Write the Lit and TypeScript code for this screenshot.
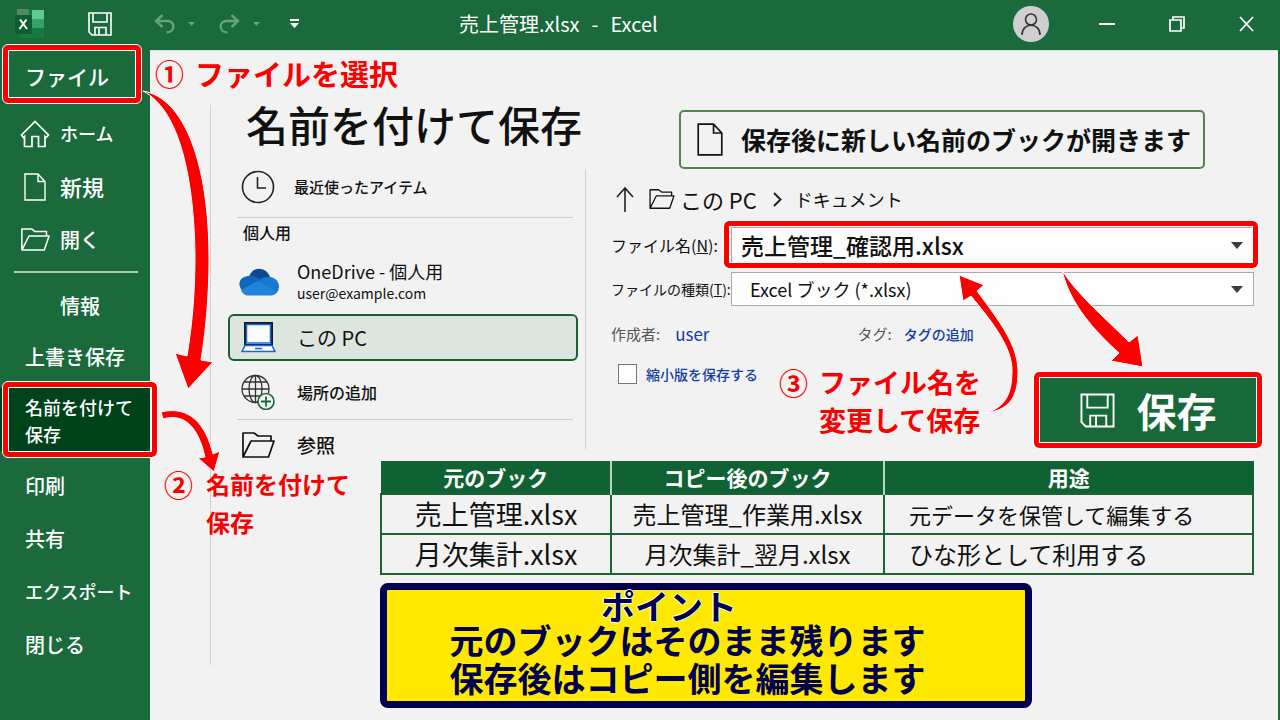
import { LitElement, html, css, svg } from "lit";
import { customElement } from "lit/decorators.js";

const floppy = (size: number, weight: number) => html`
  <svg width=${size} height=${size} viewBox="0 0 24 24" fill="none" stroke="currentColor" stroke-width=${weight} aria-hidden="true">
    <path d="M1 1H23V23H4L1 20Z M5 1V10H19V1 M7 23V15.5H18V23 M11 16V22.5" />
  </svg>`;

const page = (w: number, h: number) => html`
  <svg width=${w} height=${h} viewBox="0 0 22 28" fill="none" stroke="currentColor" stroke-width="1.4" aria-hidden="true">
    <path d="M1 1H14L21 8.5V27H1Z M14 1V8.5H21" />
  </svg>`;

const folder = (w: number, h: number) => html`
  <svg width=${w} height=${h} viewBox="0 0 33 26" fill="none" stroke="currentColor" stroke-width="1.7" stroke-linejoin="round" aria-hidden="true">
    <path d="M1 25V1H12L16 4H29V9 M1 25L9 9H32L26.500 25Z" />
  </svg>`;

const caret = (cls: string, w: number, h: number) => html`
  <svg class=${cls} width=${w} height=${h} viewBox="0 0 12 7" fill="currentColor" aria-hidden="true"><path d="M0 0H12L6 7Z" /></svg>`;

const houseIcon = html`
  <svg width="30" height="28" viewBox="0 0 30 28" fill="none" stroke="currentColor" stroke-width="1.700" aria-hidden="true">
    <path d="M1.500 15L15 1.500L28.500 15L26 17.500L25 16.500V26.500H18.500V16.500H12V26.500H4.500V16.500L3.500 17.500Z" />
  </svg>`;

const undoIcon = svg`<path d="M8 1L1.500 7L8 13 M1.500 7H13C21 7 21 18.500 12 18.500" />`;

@customElement("app-root")
export class AppRoot extends LitElement {
  static styles = css`
    :host {
      display: grid;
      position: relative;
      grid-template: 50px 1fr / 150px 1fr;
      min-height: 100vh;
      background: #1a6a3b;
      color: #111;
      font: 500 16px/1.5 "Noto Sans CJK JP", "Noto Sans", sans-serif;
    }
    * { box-sizing: border-box; }
    button, input, select { font: inherit; color: inherit; margin: 0; padding: 0; border: 0; background: none; border-radius: 0; }
    svg { flex: none; display: block; }
    a { color: #123ea3; text-decoration: none; }

    .titlebar { grid-column: 1 / -1; display: flex; align-items: center; padding: 0 26px 3px 15px; color: #fff; }
    .tool { display: flex; align-items: center; gap: 13px; }
    .dim { color: #64a37e; }
    .logo { margin-right: 44px; }
    .save-tool { margin-right: 42px; }
    .undo { margin-right: 24px; }
    .redo { margin-right: 30px; }
    .doc { display: flex; gap: 12px; margin-left: 160px; font-size: 20px; font-weight: 400; white-space: nowrap; }
    .window { display: flex; align-items: center; gap: 54px; margin-left: auto; }
    .avatar { display: grid; place-items: center; width: 36px; height: 36px; margin-right: -4px; border-radius: 50%; background: #cfcfcf; color: #333; }

    .side { display: flex; flex-direction: column; color: #fff; }
    .item { position: relative; display: flex; align-items: center; gap: 10px; height: 53px; padding-left: 25px; font-size: 20px; line-height: 27px; text-align: left; }
    .item.icon { padding-left: 20px; }
    .item.file { margin-bottom: 4px; font-size: 21px; }
    .item.new { font-size: 22px; }
    .item.small { font-size: 18px; }
    .item.deep { padding-left: 60px; }
    .item.over { height: 50px; padding-bottom: 2px; }
    .item.current { height: 63px; margin: 6px 0 8px; padding-top: 2px; font-size: 18px; background: #00421a; }
    .glyph { display: grid; place-items: center; width: 30px; }
    .side hr { width: 124px; height: 2px; margin: 5px 0 6px 14px; border: 0; background: #a9cdb7; }
    .mark { position: absolute; border: 5px solid #fa0000; border-radius: 5px; outline: 1px solid #fff; pointer-events: none; z-index: 2; }
    .mark::after { content: ""; position: absolute; inset: 0; border: 1px solid #fff; }
    .file .mark { inset: -5px 9px 0 3px; }
    .current .mark { inset: -6px -7px -6px 3px; }

    main { display: flex; margin-right: 2px; background: #f2f2f2; border-top: 1px solid #cfe2d6; }
    .rule { flex: none; width: 61px; margin: 54px 0 55px; border-right: 1px solid #cfcfcf; }
    .body { flex: 1; min-width: 0; padding: 0 24px 12px 17px; }
    .top { display: flex; height: 410px; }
    .places { flex: none; width: 350px; padding-top: 44px; }
    h1 { margin: 0 0 4px 18px; font-size: 42px; line-height: 58px; font-weight: 500; white-space: nowrap; }
    .place { display: flex; align-items: center; gap: 20px; width: 100%; height: 60px; padding-left: 11px; text-align: left; }
    .place .pic { display: grid; place-items: center; width: 38px; }
    .place.drive { height: 68px; padding-top: 4px; line-height: 22px; font-size: 18px; font-weight: 400; }
    .place.pc { height: 47px; padding-left: 9px; border: 2px solid #17612f; border-radius: 6px; background: #dce6de; font-size: 20px; font-weight: 400; }
    .place.add { height: 58px; padding-top: 4px; }
    .place.browse { height: 42px; padding-top: 8px; font-size: 19px; }
    .place.recent { gap: 17px; font-size: 15px; }
    .mail { display: block; font-size: 14px; }
    .places hr { height: 1px; margin: 0 5px 0 9px; border: 0; background: #cdcdcd; }
    .group { margin: 0 0 0 15px; font-size: 16px; line-height: 28px; font-weight: 500; }
    .split { flex: none; width: 1px; margin: 118px 25px 12px 7px; background: #cfcfcf; }

    form { flex: 1; min-width: 0; padding-top: 59px; }
    .notice { display: flex; align-items: center; gap: 18px; height: 59px; margin: 0 49px 0 68px; padding-left: 16px; border: 2px solid #55854f; border-radius: 5px; font-size: 25px; font-weight: 700; white-space: nowrap; }
    .path { display: flex; align-items: center; height: 58px; padding: 2px 0 0 5px; font-size: 22px; font-weight: 400; white-space: nowrap; }
    .path .up { margin-right: 15px; }
    .path .sep { margin: 0 13px 0 16px; }
    .path .leaf { font-size: 18px; }
    .field { position: relative; display: grid; grid-template-columns: 120px 1fr; align-items: center; height: 36px; margin-bottom: 9px; white-space: nowrap; }
    .field label { font-size: 16px; font-weight: 400; }
    .field.kind { height: 34px; margin: 0; }
    .field.kind label { font-size: 14px; }
    .field input, .field select { width: 100%; height: 36px; padding-left: 9px; border: 1px solid #aaa; background: #fdfdfd; font-size: 23px; appearance: none; outline: 0; }
    .field select { height: 34px; padding-left: 18px; font-size: 18px; font-weight: 400; }
    .drop { position: absolute; right: 11px; color: #3c3c3c; pointer-events: none; }
    .field .mark { inset: -6px -4px -5px 113px; }
    .meta { display: flex; align-items: center; height: 56px; font-size: 15px; color: #555; font-weight: 400; white-space: nowrap; }
    .meta a { margin-left: 12px; }
    .meta .author { margin: 0 148px 0 15px; font-size: 17px; }
    .tag { font-size: 14px; font-weight: 500; }
    .finish { display: flex; align-items: flex-start; }
    .thumb { display: flex; align-items: center; gap: 9px; height: 24px; padding-left: 7px; font-size: 14px; color: #123ea3; white-space: nowrap; }
    .thumb input { appearance: none; width: 19px; height: 20px; border: 1px solid #777; background: #fdfdfd; }
    .save { position: relative; display: flex; align-items: center; justify-content: center; gap: 22px; width: 218px; height: 66px; margin: 15px -3px 0 auto; background: #17693a; color: #fff; font-size: 40px; font-weight: 700; line-height: 60px; }
    .save .mark { inset: -5px; }

    .step { display: flex; gap: 11px; margin: 0; color: #fa0000; font-size: 27px; font-weight: 700; line-height: 38px; white-space: nowrap; }
    .num { font-size: 29px; }
    .step1 { position: absolute; left: 155px; top: 54px; font-size: 29px; }
    .step2 { position: absolute; left: 164px; top: 465px; font-size: 24px; gap: 13px; }
    .step3 { margin: 1px 0 0 21px; }

    .lower { margin-left: 152px; }
    table { width: 100%; border-collapse: collapse; table-layout: fixed; font-size: 24px; font-weight: 400; white-space: nowrap; }
    .c1 { width: 230px; }
    .c2 { width: 273px; }
    th { height: 32px; padding: 0; border: 1px solid #106233; background: #106233; color: #fff; font-size: 21px; line-height: 30px; font-weight: 700; }
    th + th { border-left: 2px solid #b9d3c3; }
    td { height: 40px; padding: 0; border: 2px solid #1b6434; text-align: center; line-height: 36px; }
    .name { font-size: 27px; }
    .use { padding-left: 24px; text-align: left; font-size: 22px; }
    .use.wide { font-size: 24px; }
    .point { max-width: 652px; margin-top: 8px; padding: 0 37px 4px 0; border: 7px solid #00004f; border-radius: 8px; background: #ffe900; color: #00004f; text-align: center; font-size: 34px; font-weight: 700; line-height: 38px; white-space: nowrap; }
    .point p, .point h2 { margin: 0; }
    .point h2 { padding-right: 37px; font-size: 34px; line-height: 31px; text-shadow: 1px 0 #fff, -1px 0 #fff, 0 1px #fff, 0 -1px #fff; }
    .arrows { position: absolute; left: 0; top: 0; pointer-events: none; z-index: 3; }
  `;

  render() {
    return html`
      <header class="titlebar">
        <svg class="logo" width="29" height="30" viewBox="0 0 29 30" aria-hidden="true">
          <rect x="5" y="1" width="24" height="28" rx="1" fill="#187a43" />
          <path d="M17 1H29V10H17Z" fill="#5fca92" /><path d="M17 10H29V19H17Z" fill="#35a267" />
          <path d="M2 0H14V8H2Z" fill="#4d8b68" />
          <rect x="0" y="6" width="17" height="19" rx="1" fill="#0f5c31" />
          <path d="M5 10.500L12 20 M11.500 10.500L4.500 20" stroke="#fff" stroke-width="2" />
        </svg>
        <button class="tool save-tool" aria-label="保存">${floppy(24, 1.6)}</button>
        <button class="tool undo dim" aria-label="元に戻す">
          <svg width="21" height="20" viewBox="0 0 20 20" fill="none" stroke="currentColor" stroke-width="2.400">${undoIcon}</svg>
          ${caret("", 7, 4)}
        </button>
        <button class="tool redo dim" aria-label="やり直し">
          <svg width="21" height="20" viewBox="0 0 20 20" fill="none" stroke="currentColor" stroke-width="2.400"><g transform="matrix(-1 0 0 1 20 0)">${undoIcon}</g></svg>
          ${caret("", 7, 4)}
        </button>
        <button class="tool" aria-label="カスタマイズ">
          <svg width="9" height="9" viewBox="0 0 9 9" fill="currentColor"><path d="M0 0H9V2H0Z M0 4H9L4.500 9Z" /></svg>
        </button>
        <div class="doc"><span>売上管理.xlsx</span><span>-</span><span>Excel</span></div>
        <div class="window">
          <span class="avatar">
            <svg width="20" height="22" viewBox="0 0 20 22" fill="none" stroke="currentColor" stroke-width="1.600"><circle cx="10" cy="6.500" r="5.500" /><path d="M1 22C1 9 19 9 19 22" /></svg>
          </span>
          <button aria-label="最小化"><svg width="16" height="16" viewBox="0 0 16 16" stroke="currentColor" stroke-width="2"><path d="M0 8H16" /></svg></button>
          <button aria-label="元のサイズ"><svg width="16" height="16" viewBox="0 0 16 16" fill="none" stroke="currentColor" stroke-width="1.700"><path d="M1 4H12V15H1Z M4 4V1H15V12H12" /></svg></button>
          <button aria-label="ウィンドウを閉じる"><svg width="15" height="16" viewBox="0 0 15 16" stroke="currentColor" stroke-width="1.800"><path d="M1 1L14 15M14 1L1 15" /></svg></button>
        </div>
      </header>

      <nav class="side">
        <button class="item file">ファイル<span class="mark"></span></button>
        <button class="item icon small"><span class="glyph">${houseIcon}</span>ホーム</button>
        <button class="item icon new"><span class="glyph">${page(24, 28)}</span>新規</button>
        <button class="item icon"><span class="glyph">${folder(29, 23)}</span>開く</button>
        <hr />
        <button class="item deep">情報</button>
        <button class="item over">上書き保存</button>
        <button class="item current"><span>名前を付けて<br />保存</span><span class="mark"></span></button>
        <button class="item">印刷</button>
        <button class="item">共有</button>
        <button class="item small">エクスポート</button>
        <button class="item">閉じる</button>
      </nav>

      <main>
        <div class="rule"></div>
        <div class="body">
          <div class="top">
            <section class="places">
              <h1>名前を付けて保存</h1>
              <button class="place recent">
                <span class="pic"><svg width="34" height="34" viewBox="0 0 34 34" fill="none" stroke="#222" stroke-width="1.600"><circle cx="17" cy="17" r="15.500" /><path d="M16.500 7V18H25" /></svg></span>最近使ったアイテム
              </button>
              <hr />
              <h2 class="group">個人用</h2>
              <button class="place drive">
                <span class="pic"><svg width="40" height="28" viewBox="0 0 40 28">
                  <path d="M10 9C13 -2 27 -2 31 9L20 17Z" fill="#0c4a94" />
                  <path d="M5 24C-3 18 0 8 10 8C15 7 19 10 29 16L8 27Z" fill="#0f66bc" />
                  <path d="M20 13C25 6 39 8 40 18C40 23 37 27 32 27H20Z" fill="#1877cf" />
                  <path d="M2 22L19 13L38 24C36 27 33 27.500 31 27.500H9C6 27.500 3 25 2 22Z" fill="#2184da" />
                </svg></span>
                <span>OneDrive - 個人用<span class="mail">user@example.com</span></span>
              </button>
              <button class="place pc">
                <span class="pic"><svg width="35" height="31" viewBox="0 0 35 31" fill="#fafcff">
                  <path d="M4 1H31V23H4Z" stroke="#151c28" stroke-width="2" /><path d="M5.500 2.500H29.500V21H5.500Z" stroke="#1767da" stroke-width="1.500" />
                  <path d="M4 23.500H31L34 29.500H1Z" stroke="#1767da" stroke-width="1.500" /><path d="M14 26.500H21" stroke="#1767da" stroke-width="1.500" />
                </svg></span>この PC
              </button>
              <button class="place add">
                <span class="pic"><svg width="34" height="36" viewBox="0 0 34 36" fill="none" stroke="#333" stroke-width="1.300">
                  <circle cx="14.500" cy="15" r="13.500" /><ellipse cx="14.500" cy="15" rx="6.500" ry="13.500" /><path d="M14.500 1.500V28.500M1 15H28M3 8H26M3 22H26" />
                  <circle cx="25" cy="27.500" r="8" fill="#f2f2f2" stroke="#1e6a38" stroke-width="1.600" /><path d="M20 27.500H30M25 22.500V32.500" stroke="#1e6a38" stroke-width="1.800" />
                </svg></span>場所の追加
              </button>
              <hr />
              <button class="place browse"><span class="pic">${folder(33, 26)}</span>参照</button>
            </section>
            <div class="split"></div>

            <form @submit=${(e: Event) => e.preventDefault()}>
              <div class="notice">${page(26, 33)}保存後に新しい名前のブックが開きます</div>
              <div class="path">
                <svg class="up" width="18" height="25" viewBox="0 0 18 25" fill="none" stroke="#222" stroke-width="1.600"><path d="M9 25V1M1 10L9 1L17 10" /></svg>
                ${folder(26, 20)}<span class="pc-name">&nbsp;この PC</span>
                <svg class="sep" width="9" height="15" viewBox="0 0 9 15" fill="none" stroke="#222" stroke-width="2"><path d="M1 1L7.500 7.500L1 14" /></svg>
                <span class="leaf">ドキュメント</span>
              </div>
              <div class="field">
                <label for="name">ファイル名(<u>N</u>):</label>
                <input id="name" type="text" value="売上管理_確認用.xlsx" />
                ${caret("drop", 12, 7)}
                <span class="mark"></span>
              </div>
              <div class="field kind">
                <label for="kind">ファイルの種類(<u>T</u>):</label>
                <select id="kind"><option>Excel ブック (*.xlsx)</option></select>
                ${caret("drop", 12, 7)}
              </div>
              <div class="meta">
                <span>作成者:</span><a class="author" href="#author">user</a>
                <span>タグ:</span><a class="tag" href="#tag">タグの追加</a>
              </div>
              <div class="finish">
                <label class="thumb"><input type="checkbox" />縮小版を保存する</label>
                <p class="step step3"><span class="num">③</span><span>ファイル名を<br />変更して保存</span></p>
                <button class="save">${floppy(35, 1.3)}保存<span class="mark"></span></button>
              </div>
            </form>
          </div>

          <div class="lower">
            <table>
              <colgroup><col class="c1" /><col class="c2" /><col /></colgroup>
              <thead><tr><th>元のブック</th><th>コピー後のブック</th><th>用途</th></tr></thead>
              <tbody>
                <tr><td class="name">売上管理.xlsx</td><td>売上管理_作業用.xlsx</td><td class="use">元データを保管して編集する</td></tr>
                <tr><td class="name">月次集計.xlsx</td><td>月次集計_翌月.xlsx</td><td class="use wide">ひな形として利用する</td></tr>
              </tbody>
            </table>
            <section class="point">
              <h2>ポイント</h2>
              <p>元のブックはそのまま残ります<br />保存後はコピー側を編集します</p>
            </section>
          </div>
        </div>
      </main>

      <p class="step step1"><span class="num">①</span><span>ファイルを選択</span></p>
      <p class="step step2"><span class="num">②</span><span>名前を付けて<br />保存</span></p>
      <svg class="arrows" width="1280" height="720" viewBox="0 0 1280 720" fill="#fa0000" stroke="#fff" stroke-width="1" aria-hidden="true">
        <path d="M143 91C185 98 209 165 209 258C209 300 205 335 201 360L213 362L188 389L175 353L187 356C192 325 195 295 195 255C194 180 180 110 143 91Z" />
        <path d="M161 412C190 405 206 425 213 454L220 451L214 472L198 458L205 457C198 426 184 413 163 419Z" />
        <path d="M986 413C1005 407 1012 395 1012 370C1012 345 988 317 971 296L963 301L959 275L984 285L977 291C1000 322 1018 345 1018 372C1018 400 1007 410 986 413Z" />
        <path d="M1062 270C1075 292 1102 315 1129 342L1138 335L1143 367L1111 361L1119 353C1096 332 1070 305 1062 270Z" />
      </svg>
    `;
  }
}
